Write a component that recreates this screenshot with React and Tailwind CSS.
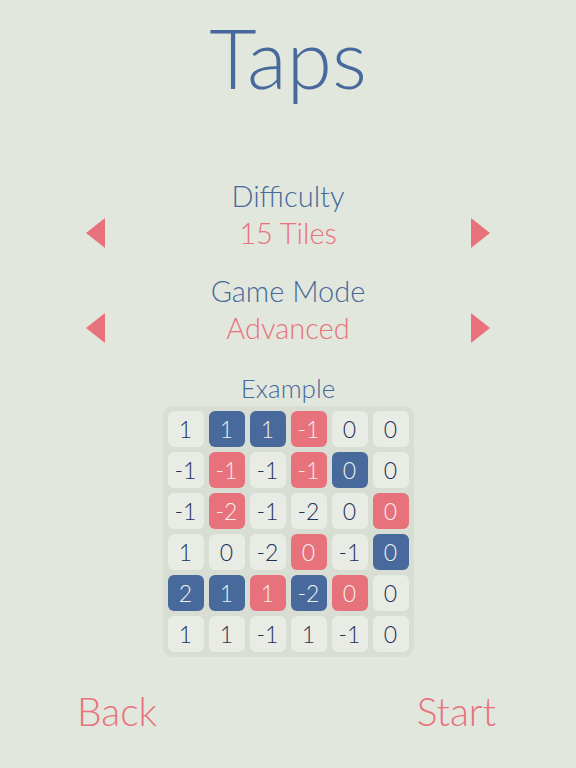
const grid = [
  [["1", "l"], ["1", "b"], ["1", "b"], ["-1", "r"], ["0", "l"], ["0", "l"]],
  [["-1", "l"], ["-1", "r"], ["-1", "l"], ["-1", "r"], ["0", "b"], ["0", "l"]],
  [["-1", "l"], ["-2", "r"], ["-1", "l"], ["-2", "l"], ["0", "l"], ["0", "r"]],
  [["1", "l"], ["0", "l"], ["-2", "l"], ["0", "r"], ["-1", "l"], ["0", "b"]],
  [["2", "b"], ["1", "b"], ["1", "r"], ["-2", "b"], ["0", "r"], ["0", "l"]],
  [["1", "l"], ["1", "l"], ["-1", "l"], ["1", "l"], ["-1", "l"], ["0", "l"]],
];

const tileColors = {
  l: "bg-[#e9ece4] text-[#1e3257]",
  b: "bg-[#47699b] text-[#eef1ec]",
  r: "bg-[#e8727b] text-[#f4efee]",
};

function Arrow({ dir }) {
  return (
    <svg width="19" height="30" viewBox="0 0 19 30">
      {dir === "left" ? (
        <polygon points="19,0 19,30 0,15" fill="#e8727b" />
      ) : (
        <polygon points="0,0 0,30 19,15" fill="#e8727b" />
      )}
    </svg>
  );
}

function Setting({ label, value }) {
  return (
    <div className="flex flex-col">
      <div className="text-center text-[29px] leading-[37px] text-[#47699b]">{label}</div>
      <div className="flex items-center justify-between px-[86px]">
        <Arrow dir="left" />
        <div className="text-[29px] leading-[37px] text-[#e8727b]">{value}</div>
        <Arrow dir="right" />
      </div>
    </div>
  );
}

export default function App() {
  return (
    <div
      className="w-[576px] h-[768px] bg-[#e2e7dd] flex flex-col font-light"
      style={{ fontFamily: "Lato, 'Noto Sans', sans-serif" }}
    >
      <div className="pt-[17px] text-center text-[82px] leading-[80px] text-[#47699b]">Taps</div>

      <div className="mt-[80px] flex flex-col gap-[21px]">
        <Setting label="Difficulty" value="15 Tiles" />
        <Setting label="Game Mode" value="Advanced" />
      </div>

      <div className="mt-[27px] text-center text-[26px] leading-[31px] text-[#47699b]">Example</div>

      <div className="mt-[2px] flex justify-center">
        <div className="bg-[#d9ded5] rounded-[10px] p-[5px] grid grid-cols-6 gap-[5px]">
          {grid.flat().map(([n, c], i) => (
            <div
              key={i}
              className={`w-[36px] h-[36px] rounded-[6px] flex items-center justify-center text-[23px] ${tileColors[c]}`}
            >
              {n}
            </div>
          ))}
        </div>
      </div>

      <div className="mt-[34px] flex justify-between pl-[77px] pr-[80px] text-[39px] leading-[40px] text-[#e8727b]">
        <span>Back</span>
        <span>Start</span>
      </div>
    </div>
  );
}
